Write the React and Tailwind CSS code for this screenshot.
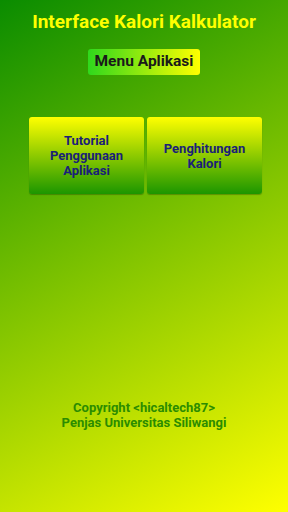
import React from 'react';

const MenuCard = ({ lines }) => (
  <button className="w-[115px] h-[77px] rounded-[3px] bg-[linear-gradient(to_bottom,#ffff00,#1c9600)] flex flex-col items-center justify-center shadow-[0_1px_1px_rgba(0,0,0,0.25)]">
    {lines.map((line) => (
      <span key={line} className="text-[13px] leading-[15px] font-bold text-[#1a2178]">
        {line}
      </span>
    ))}
  </button>
);

export default function App() {
  return (
    <div className="w-full h-[512px] overflow-hidden flex flex-col items-center bg-[linear-gradient(151deg,#0a8c00,#ffff00)] font-['Roboto',sans-serif]">
      {/* Title */}
      <h1 className="mt-[11px] text-[19px] leading-[22px] font-bold text-[#ffff00]">
        Interface Kalori Kalkulator
      </h1>

      {/* Menu label */}
      <div className="mt-[16px] h-[26px] px-[7px] rounded-[3px] bg-[linear-gradient(to_right,#2fd81c,#ffff00)] flex items-center">
        <span className="text-[15.5px] font-bold text-[#1a1a1a]">Menu Aplikasi</span>
      </div>

      {/* Menu buttons */}
      <div className="mt-[42px] pl-[3px] flex gap-[3px]">
        <MenuCard lines={['Tutorial', 'Penggunaan', 'Aplikasi']} />
        <MenuCard lines={['Penghitungan', 'Kalori']} />
      </div>

      {/* Footer */}
      <div className="mt-[206px] flex flex-col items-center text-[13px] leading-[15px] font-bold text-[#2b8c00]">
        <span>Copyright &lt;hicaltech87&gt;</span>
        <span>Penjas Universitas Siliwangi</span>
      </div>
    </div>
  );
}
